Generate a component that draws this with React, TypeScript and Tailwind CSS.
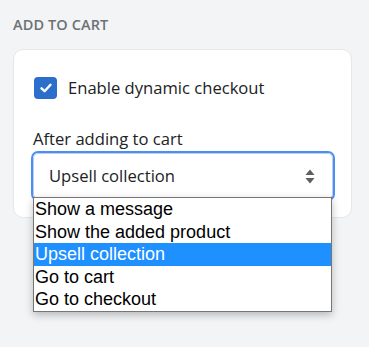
import React from "react";

const ui = { fontFamily: '"Open Sans", "Noto Sans", sans-serif' };
const arial = { fontFamily: '"Liberation Sans", Arial, sans-serif' };

export default function App() {
  const options = ["Show a message", "Show the added product", "Upsell collection", "Go to cart", "Go to checkout"];
  return (
    <div className="w-[369px] h-[347px] bg-[#f3f4f6] px-[13px] pt-[15px]" style={ui}>
      <div className="text-[14.5px] leading-[20px] font-semibold text-[#6d7175] tracking-[0.1px]">ADD TO CART</div>
      <div className="mt-[14px] w-[339px] rounded-[10px] border border-[#e6e7e9] bg-white px-[20px] pt-[26px] pb-[18px]">
        <label className="flex items-center gap-[11px]">
          <span className="flex h-[22px] w-[23px] items-center justify-center rounded-[4px] bg-[#2c6ecb]">
            <svg width="14" height="14" viewBox="0 0 14 14" fill="none">
              <path d="M2.5 7.3 L5.6 10.2 L11.5 3.8" stroke="white" strokeWidth="2.4" strokeLinecap="round" strokeLinejoin="round" />
            </svg>
          </span>
          <span className="text-[16.6px] leading-[24px] text-[#202223]">Enable dynamic checkout</span>
        </label>
        <div className="mt-[27px] text-[16.6px] leading-[24px] text-[#202223] -ml-[1px]">After adding to cart</div>
        <div className="relative mt-[2px] -ml-[1px] -mr-[2px]">
          <div className="flex h-[46px] items-center justify-between rounded-[5px] border border-[#c9cccf] pl-[15px] pr-[17px] shadow-[0_0_0_2px_#458fff]">
            <span className="text-[16.6px] text-[#202223]">Upsell collection</span>
            <svg width="10" height="15" viewBox="0 0 10 15">
              <path d="M5 0.5 L9.5 6 H0.5 Z" fill="#5c5f62" />
              <path d="M5 14.5 L9.5 9 H0.5 Z" fill="#5c5f62" />
            </svg>
          </div>
          <div
            className="absolute left-0 top-[44px] w-[299px] border border-[#767676] bg-white shadow-[0_3px_8px_rgba(0,0,0,0.25)]"
            style={arial}
          >
            {options.map((o) => (
              <div
                key={o}
                className={
                  "h-[22.5px] text-[18px] leading-[22.5px] pl-[1px] " +
                  (o === "Upsell collection" ? "bg-[#1e90ff] text-white" : "text-black")
                }
              >
                {o}
              </div>
            ))}
          </div>
        </div>
      </div>
    </div>
  );
}
